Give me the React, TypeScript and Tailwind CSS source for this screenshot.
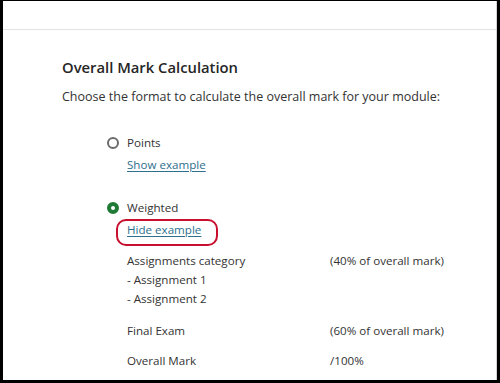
import React from "react";

export default function App() {
  const font = { fontFamily: '"Open Sans", "Noto Sans", sans-serif' };
  return (
    <div className="w-[500px] h-[383px] bg-black pl-[3px] pt-px pr-[3px] pb-[3px]" style={font}>
      <div className="w-full h-full bg-white border-r border-[#d4d4d4] flex flex-col text-[#333333]">
        <div className="h-[29px] border-b border-[#e3e3e3] shrink-0" />
        <div className="pl-[59px] pt-[25px]">
          <h1 className="text-[14.8px] font-semibold text-[#262626] leading-[24px]">Overall Mark Calculation</h1>
          <p className="text-[12.5px] leading-[20px] mt-[8px]">
            Choose the format to calculate the overall mark for your module:
          </p>
          <div className="pl-[45px] mt-[26px] text-[11.6px]">
            <div className="flex items-center gap-[8px] h-[20px]">
              <span className="w-[12px] h-[12px] rounded-full border-2 border-[#6b6b6b]" />
              <span>Points</span>
            </div>
            <div className="pl-[20px] mt-[2px] h-[20px] leading-[20px]">
              <span className="text-[#2e6f8e] underline underline-offset-2">Show example</span>
            </div>
            <div className="flex items-center gap-[8px] h-[20px] mt-[23px]">
              <span className="w-[12px] h-[12px] rounded-full border-[4px] border-[#1f7a36]" />
              <span>Weighted</span>
            </div>
            <div className="pl-[20px] mt-[2px] h-[20px] leading-[20px] relative">
              <span className="text-[#2e6f8e] underline underline-offset-2">Hide example</span>
              <div className="absolute left-[9px] top-[-1px] w-[102px] h-[27px] border-2 border-[#c8102e] rounded-[10px]" />
            </div>
            <div className="pl-[20px] mt-[11px]">
              <div className="grid grid-cols-[203px_1fr] leading-[19px]">
                <div>
                  <div>Assignments category</div>
                  <div>- Assignment 1</div>
                  <div>- Assignment 2</div>
                </div>
                <div>(40% of overall mark)</div>
                <div className="mt-[13px]">Final Exam</div>
                <div className="mt-[13px]">(60% of overall mark)</div>
                <div className="mt-[11px]">Overall Mark</div>
                <div className="mt-[11px]">/100%</div>
              </div>
            </div>
          </div>
        </div>
      </div>
    </div>
  );
}
